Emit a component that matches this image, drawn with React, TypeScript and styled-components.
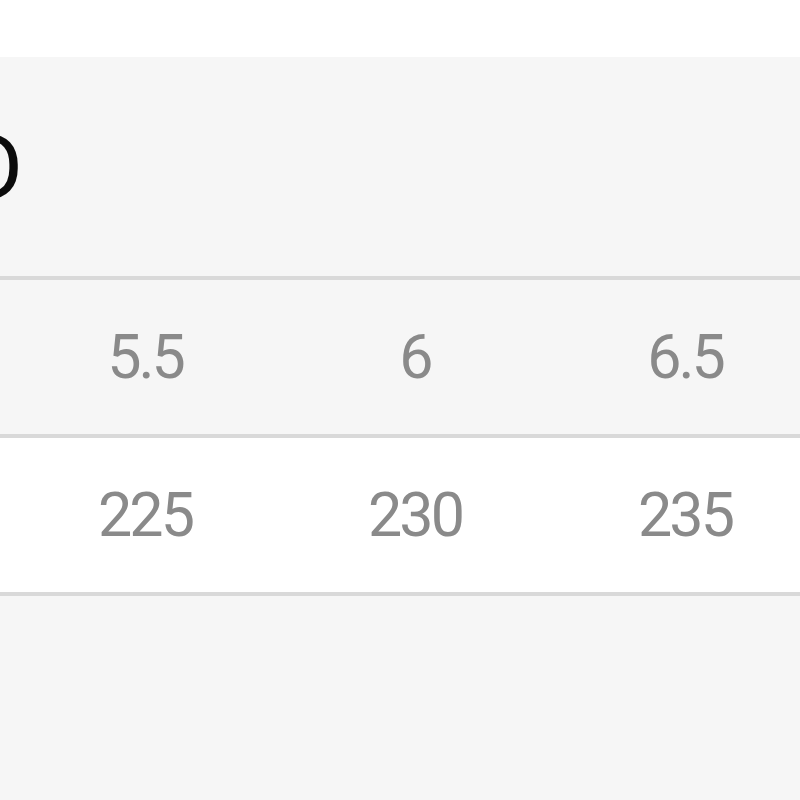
import React from 'react';
import styled, { createGlobalStyle } from 'styled-components';

const GlobalStyle = createGlobalStyle`
	html, body {
		margin: 0;
		padding: 0;
		background: #f6f6f6;
		overflow: hidden;
	}
	body {
		font-family: Roboto, "Liberation Sans", sans-serif;
	}
`;

const sizes = [
	{ us: '5.5', mm: '225' },
	{ us: '6', mm: '230' },
	{ us: '6.5', mm: '235' },
];

const App = () => {
	return (
		<Page>
			<GlobalStyle />
			<TopBar />
			<Panel>
				<TitleRow>
					<Title>D</Title>
				</TitleRow>
				<Table>
					<Row $tone="gray">
						<Spacer />
						{sizes.map((s) => (
							<Cell key={s.us}>{s.us}</Cell>
						))}
					</Row>
					<Row $tone="white">
						<Spacer />
						{sizes.map((s) => (
							<Cell key={s.mm}>{s.mm}</Cell>
						))}
					</Row>
				</Table>
			</Panel>
		</Page>
	);
};

const Page = styled.div`
	width: 800px;
	height: 800px;
	overflow: hidden;
	background: #f6f6f6;
`;

const TopBar = styled.div`
	height: 57px;
	background: #ffffff;
`;

const Panel = styled.div`
	display: flex;
	flex-direction: column;
`;

const TitleRow = styled.div`
	height: 219px;
	display: flex;
	align-items: center;
	padding-top: 4px;
	box-sizing: border-box;
	overflow: hidden;
`;

const Title = styled.h1`
	margin: 0 0 0 -36px;
	font-family: Roboto, "Liberation Sans", sans-serif;
	font-weight: 400;
	font-size: 90px;
	line-height: 1;
	color: #0c0c0c;
`;

const Table = styled.div`
	display: flex;
	flex-direction: column;
	border-top: 4px solid #d9d9d9;
`;

const Row = styled.div<{ $tone: 'gray' | 'white' }>`
	display: grid;
	grid-template-columns: 10px repeat(3, 270px);
	height: 154px;
	align-items: center;
	background: ${(p) => (p.$tone === 'white' ? '#ffffff' : '#f6f6f6')};
	border-bottom: 4px solid #d9d9d9;
`;

const Spacer = styled.div``;

const Cell = styled.div`
	text-align: center;
	font-size: 61px;
	letter-spacing: -3px;
	color: #8a8a8a;
	line-height: 1;
`;

export default App;
